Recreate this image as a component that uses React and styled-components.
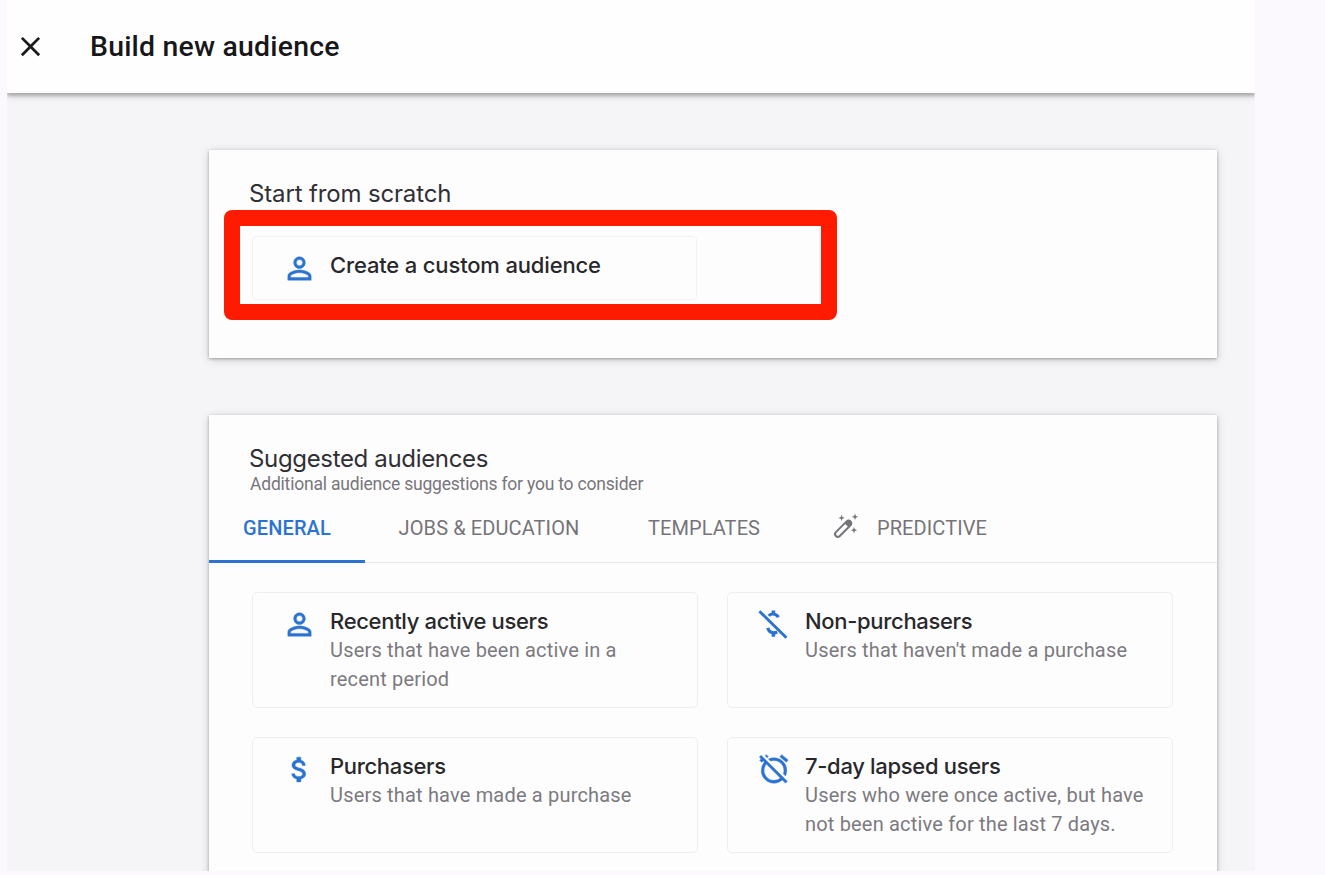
import React, { useState } from 'react';
import { createGlobalStyle, styled } from 'styled-components';
import { MdPersonOutline, MdAttachMoney, MdAlarmOff, MdClose } from 'react-icons/md';

const MoneyOffIcon = () => (
  <svg viewBox="0 0 30 30" width="30" height="30" fill="none" stroke="currentColor">
    <path d="M0.4 2.2 L27.4 28.8" strokeWidth="3" />
    <path d="M9.8 6.8 C11.6 4.2 17 4.2 19.4 8.2" strokeWidth="3.2" />
    <path d="M14.4 1.6 V6 M14.4 23 V27.8" strokeWidth="3.6" />
    <path d="M8.8 18.8 C9.8 23.2 14.2 25 18.2 23" strokeWidth="3.2" />
  </svg>
);

const WandIcon = () => (
  <svg viewBox="0 0 26 26" width="26" height="26" fill="currentColor">
    <path
      d="M13.6 7.4 L2.9 18.1 a2.7 2.7 0 0 0 3.9 3.9 L17.5 11.3 a2.7 2.7 0 0 0 -3.9 -3.9 Z"
      fill="none"
      stroke="currentColor"
      strokeWidth="2"
    />
    <path d="M11.6 9.4 L14 7 a2.4 2.4 0 0 1 4 4 L15.6 13.2 Z" />
    <path d="M8.6 0.8 L9.5 3 L11.7 3.9 L9.5 4.8 L8.6 7 L7.7 4.8 L5.5 3.9 L7.7 3 Z" />
    <path d="M22 -0.4 L22.9 1.9 L25.2 2.8 L22.9 3.7 L22 6 L21.1 3.7 L18.8 2.8 L21.1 1.9 Z" />
    <path d="M21 13 L21.9 15.3 L24.2 16.2 L21.9 17.1 L21 19.4 L20.1 17.1 L17.8 16.2 L20.1 15.3 Z" />
  </svg>
);

const tabs = [
  { name: 'GENERAL', width: 156 },
  { name: 'JOBS & EDUCATION', width: 248 },
  { name: 'TEMPLATES', width: 182 },
  { name: 'PREDICTIVE', width: 230, icon: <WandIcon /> }
];

const audiences = [
  {
    title: 'Recently active users',
    body: 'Users that have been active in a recent period',
    icon: <MdPersonOutline size={35} />
  },
  { title: 'Non-purchasers', body: "Users that haven't made a purchase", icon: <MoneyOffIcon /> },
  { title: 'Purchasers', body: 'Users that have made a purchase', icon: <MdAttachMoney size={33} /> },
  {
    title: '7-day lapsed users',
    body: 'Users who were once active, but have not been active for the last 7 days.',
    icon: <MdAlarmOff size={34} />
  }
];

function App() {
  const [selected, setSelected] = useState('GENERAL');

  return (
    <>
      <GlobalStyle />
      <StWindow>
        <StHeader>
          <StCloseButton aria-label="Close">
            <MdClose size={33} />
          </StCloseButton>
          <StPageTitle>Build new audience</StPageTitle>
        </StHeader>
        <StContent>
          <StScratchPanel>
            <StHeading>Start from scratch</StHeading>
            <StCustomAudience>
              <StIcon>
                <MdPersonOutline size={35} />
              </StIcon>
              <StAudienceTitle $spacing={-0.16}>Create a custom audience</StAudienceTitle>
              <StHighlight />
            </StCustomAudience>
          </StScratchPanel>
          <StSuggestedPanel>
            <StHeading $spacing={-0.34}>Suggested audiences</StHeading>
            <StSubHeading>Additional audience suggestions for you to consider</StSubHeading>
            <StTabs>
              {tabs.map((tab) => (
                <StTab
                  key={tab.name}
                  $width={tab.width}
                  $active={tab.name === selected}
                  onClick={() => setSelected(tab.name)}
                >
                  {tab.icon}
                  {tab.name}
                </StTab>
              ))}
            </StTabs>
            <StAudienceGrid>
              {audiences.map((item) => (
                <StAudienceCard key={item.title}>
                  <StIcon>{item.icon}</StIcon>
                  <div>
                    <StAudienceTitle>{item.title}</StAudienceTitle>
                    <StAudienceBody>{item.body}</StAudienceBody>
                  </div>
                </StAudienceCard>
              ))}
            </StAudienceGrid>
          </StSuggestedPanel>
        </StContent>
      </StWindow>
    </>
  );
}

export default App;

const GlobalStyle = createGlobalStyle`
  * {
    box-sizing: border-box;
  }
  body {
    margin: 0;
    height: 875px;
    overflow: hidden;
    background-color: #fbf9fd;
    font-family: Roboto, 'Liberation Sans', sans-serif;
  }
  button {
    border: 0;
    padding: 0;
    background: none;
    font-family: inherit;
    cursor: pointer;
  }
`;

const StWindow = styled.div`
  width: 1248px;
  height: 871px;
  margin-left: 7px;
  overflow: hidden;
  display: flex;
  flex-direction: column;
  background-color: #f5f4f7;
`;

const StHeader = styled.header`
  flex: none;
  display: flex;
  align-items: center;
  height: 93px;
  padding-left: 7px;
  z-index: 1;
  background-color: #fefefe;
  box-shadow: 0 3px 3px rgba(0, 0, 0, 0.22), 0 3px 8px rgba(0, 0, 0, 0.14);
`;

const StCloseButton = styled.button`
  display: flex;
  color: #1b1b1d;
`;

const StPageTitle = styled.h1`
  margin: 0 0 0 43px;
  font-size: 28.4px;
  font-weight: 500;
  letter-spacing: 0.22px;
  color: #17171a;
`;

const StContent = styled.main`
  flex: 1;
  display: flex;
  flex-direction: column;
  gap: 57px;
  padding: 57px 38px 0 202px;
`;

const StPanel = styled.section`
  flex: none;
  width: 1008px;
  background-color: #fefdfe;
  box-shadow: 0 1px 3px rgba(0, 0, 0, 0.3), 0 2px 10px rgba(0, 0, 0, 0.14);
`;

const StScratchPanel = styled(StPanel)`
  height: 208px;
  padding: 28px 43px 0;
`;

const StSuggestedPanel = styled(StPanel)`
  height: 480px;
  padding-top: 28px;

  > h2 {
    margin-left: 40px;
  }
`;

const StHeading = styled.h2`
  margin: 0 0 0 -3px;
  font-family: Inter, sans-serif;
  font-size: 24px;
  font-weight: 400;
  line-height: 32px;
  letter-spacing: ${(props) => props.$spacing ?? -0.15}px;
  color: #303034;
`;

const StSubHeading = styled.p`
  margin: -1px 0 0 41px;
  font-size: 17.5px;
  line-height: 20px;
  letter-spacing: -0.2px;
  color: #77767b;
`;

const StCustomAudience = styled.div`
  position: relative;
  display: flex;
  width: 445px;
  height: 64px;
  margin-top: 26px;
  padding: 14px 0 0 29px;
  border: 1px solid #f3f1f5;
  border-radius: 4px;
`;

/* marker drawn around the custom audience option */
const StHighlight = styled.div`
  position: absolute;
  top: -27px;
  left: -29px;
  width: 613px;
  height: 110px;
  border: 16px solid #fe1b02;
  border-radius: 8px;
  pointer-events: none;
`;

const StIcon = styled.span`
  flex: none;
  display: flex;
  justify-content: center;
  align-items: center;
  width: 34px;
  height: 34px;
  margin-right: 14px;
  color: #2b73d2;

  > svg {
    flex: none;
    overflow: visible;
  }
  > svg[stroke-width='0'] path:not([fill='none']) {
    stroke-width: 0.3px;
  }
`;

const StAudienceTitle = styled.h3`
  margin: 0;
  font-family: Inter, sans-serif;
  font-size: 22px;
  font-weight: 500;
  line-height: 29px;
  letter-spacing: ${(props) => props.$spacing ?? -0.32}px;
  color: #28282b;
`;

const StAudienceBody = styled.p`
  margin: 0;
  font-size: 20px;
  line-height: 28.6px;
  letter-spacing: 0.18px;
  color: #7b7a7f;
`;

const StTabs = styled.nav`
  display: flex;
  height: 69px;
  border-bottom: 1px solid #e9e7ec;
`;

const StTab = styled.button`
  display: flex;
  justify-content: center;
  align-items: center;
  gap: 18px;
  width: ${(props) => props.$width}px;
  height: 69px;
  padding-top: 2px;
  border-bottom: 3px solid ${(props) => (props.$active ? '#2b73d2' : 'transparent')};
  font-size: 20px;
  font-weight: ${(props) => (props.$active ? 500 : 400)};
  letter-spacing: 0.1px;
  color: ${(props) => (props.$active ? '#2b73d2' : '#757479')};

  > svg {
    margin-top: -3px;
    overflow: visible;
  }
`;

const StAudienceGrid = styled.div`
  display: grid;
  grid-template-columns: 446px 446px;
  grid-auto-rows: 116px;
  gap: 29px;
  padding: 29px 43px;
`;

const StAudienceCard = styled.article`
  display: flex;
  padding: 14px 20px 0 29px;
  border: 1px solid #efedf2;
  border-radius: 5px;
`;
